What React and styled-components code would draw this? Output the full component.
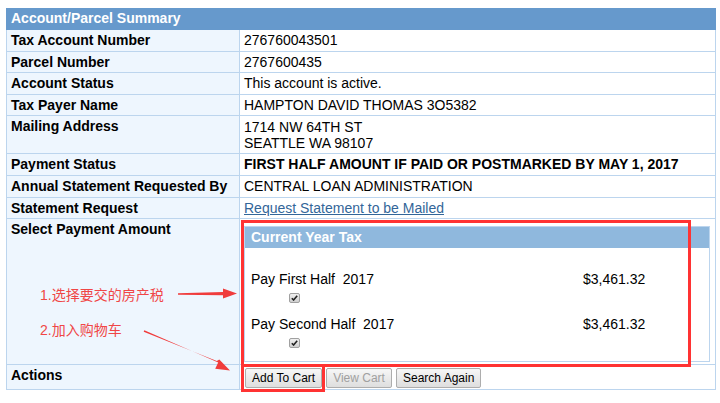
import React from "react";
import styled, { createGlobalStyle } from "styled-components";

const GlobalStyle = createGlobalStyle`
  html, body {
    margin: 0;
    padding: 0;
    background: #ffffff;
    font-family: "Liberation Sans", Arial, sans-serif;
  }
`;

const Page = styled.div`
  position: relative;
  width: 720px;
  height: 403px;
  padding: 8px 0 0 6px;
  box-sizing: border-box;
  overflow: hidden;
`;

const Summary = styled.table`
  width: 710px;
  border-collapse: collapse;
  font-size: 14px;
  color: #000;
`;

const HeadCell = styled.th`
  background: #6699cc;
  color: #fff;
  text-align: left;
  font-weight: bold;
  padding: 1px 4px 2px 4px;
  line-height: 17px;
  border: 1px solid #6699cc;
`;

const Label = styled.td`
  width: 226px;
  background: #eef6fe;
  font-weight: bold;
  vertical-align: top;
  padding: 3px 4px 2px 4px;
  line-height: 15.6px;
  border: 1px solid #bcd5ee;
`;

const Value = styled.td`
  background: #fff;
  vertical-align: top;
  padding: ${(p) => p.$pad || "3px 4px 2px 4px"};
  line-height: 15.6px;
  font-weight: ${(p) => (p.$bold ? "bold" : "normal")};
  border: 1px solid #bcd5ee;
`;

const Address = styled.div`
  line-height: 16px;
`;

const Link = styled.a`
  color: #336699;
  text-decoration: underline;
`;

const Inner = styled.div`
  border: 1px solid #bcd5ee;
  width: 464px;
`;

const InnerHead = styled.div`
  background: #8fb8dd;
  color: #fff;
  font-weight: bold;
  line-height: 21px;
  padding: 0 6px;
`;

const InnerBody = styled.div`
  padding: 22px 6px 8px 6px;
  display: flex;
  flex-direction: column;
  gap: 7px;
`;

const Item = styled.div`
  display: flex;
  flex-direction: column;
`;

const ItemLine = styled.div`
  display: grid;
  grid-template-columns: 332px auto;
  line-height: 18px;
  white-space: pre;
`;

const CheckRow = styled.div`
  height: 20px;
  display: flex;
  align-items: center;
  padding-left: 38px;
`;

const Check = styled.span`
  width: 11px;
  height: 10px;
  border: 1px solid #a0a0a0;
  border-radius: 2px;
  background: linear-gradient(#f0f0f0, #cfcfcf);
  display: flex;
  align-items: center;
  justify-content: center;
  box-sizing: border-box;
`;

const Buttons = styled.div`
  display: flex;
  gap: 4px;
  padding-left: 1px;
`;

const Button = styled.button`
  font-family: "Liberation Sans", Arial, sans-serif;
  font-size: 12px;
  height: 20px;
  padding: 0 6px;
  border: 1px solid #adadad;
  border-radius: 2px;
  background: linear-gradient(#f7f7f7, #dedede);
  color: ${(p) => (p.disabled ? "#a0a0a0" : "#000")};
`;

const Overlay = styled.svg`
  position: absolute;
  left: 0;
  top: 0;
  pointer-events: none;
`;

const Note = styled.div`
  position: absolute;
  left: ${(p) => p.$x}px;
  top: ${(p) => p.$y}px;
  color: #f04646;
  font-size: 14px;
  font-family: "Liberation Sans", "Noto Sans CJK SC", sans-serif;
  white-space: nowrap;
`;

const RedBox = styled.div`
  position: absolute;
  left: ${(p) => p.$x}px;
  top: ${(p) => p.$y}px;
  width: ${(p) => p.$w}px;
  height: ${(p) => p.$h}px;
  border: 3px solid #ff3333;
  box-sizing: border-box;
  pointer-events: none;
`;

const rows = [
  ["Tax Account Number", "276760043501"],
  ["Parcel Number", "2767600435"],
  ["Account Status", "This account is active."],
  ["Tax Payer Name", "HAMPTON DAVID THOMAS 3O5382"],
];

const CheckMark = () => (
  <svg width="7" height="6" viewBox="0 0 7 6">
    <path d="M0.8 3.2 L2.6 5 L6.2 0.8" stroke="#222" strokeWidth="1.6" fill="none" />
  </svg>
);

const PayItem = ({ label, amount }) => (
  <Item>
    <ItemLine>
      <span>{label}</span>
      <span>{amount}</span>
    </ItemLine>
    <CheckRow>
      <Check>
        <CheckMark />
      </Check>
    </CheckRow>
  </Item>
);

const App = () => {
  return (
    <Page>
      <GlobalStyle />
      <Summary>
        <tbody>
          <tr>
            <HeadCell colSpan={2}>Account/Parcel Summary</HeadCell>
          </tr>
          {rows.map(([k, v]) => (
            <tr key={k}>
              <Label>{k}</Label>
              <Value>{v}</Value>
            </tr>
          ))}
          <tr>
            <Label>Mailing Address</Label>
            <Value>
              <Address>
                1714 NW 64TH ST
                <br />
                SEATTLE WA 98107
              </Address>
            </Value>
          </tr>
          <tr>
            <Label>Payment Status</Label>
            <Value $bold>FIRST HALF AMOUNT IF PAID OR POSTMARKED BY MAY 1, 2017</Value>
          </tr>
          <tr>
            <Label>Annual Statement Requested By</Label>
            <Value>CENTRAL LOAN ADMINISTRATION</Value>
          </tr>
          <tr>
            <Label>Statement Request</Label>
            <Value>
              <Link href="#">Request Statement to be Mailed</Link>
            </Value>
          </tr>
          <tr>
            <Label>Select Payment Amount</Label>
            <Value $pad="7px 5px 2px 4px">
              <Inner>
                <InnerHead>Current Year Tax</InnerHead>
                <InnerBody>
                  <PayItem label="Pay First Half  2017" amount="$3,461.32" />
                  <PayItem label="Pay Second Half  2017" amount="$3,461.32" />
                </InnerBody>
              </Inner>
            </Value>
          </tr>
          <tr>
            <Label>Actions</Label>
            <Value $pad="3px 4px 1px 4px">
              <Buttons>
                <Button>Add To Cart</Button>
                <Button disabled>View Cart</Button>
                <Button>Search Again</Button>
              </Buttons>
            </Value>
          </tr>
        </tbody>
      </Summary>

      <RedBox $x={241} $y={220} $w={450} $h={147} />
      <RedBox $x={241} $y={364} $w={84} $h={28} />

      <Note $x={40} $y={284}>1.选择要交的房产税</Note>
      <Note $x={40} $y={319}>2.加入购物车</Note>

      <Overlay width="720" height="403" viewBox="0 0 720 403">
        <polygon
          points="178,293.2 223,292 223,288.5 237,293.5 223,298.5 223,295.2 178,294.8"
          fill="#f03c3c"
        />
        <polygon
          points="144.3,330.3 218.2,362.4 215.2,368.8 230,370.5 219.3,359.6 216.8,360.9 143.7,331.7"
          fill="#f03c3c"
        />
      </Overlay>
    </Page>
  );
};

export default App;
